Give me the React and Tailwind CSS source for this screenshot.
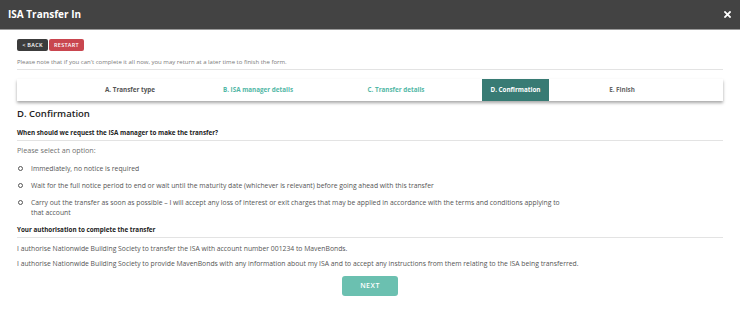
import React from "react";

export default function App() {
  const font = { fontFamily: '"Open Sans", "Liberation Sans", sans-serif' };
  return (
    <div className="w-[740px] h-[313px] bg-white overflow-hidden" style={font}>
      <div className="h-[30px] bg-[#434343] border-b border-[#9a9a9a] flex items-center justify-between pl-[8px] pr-[9px]">
        <span className="text-white font-bold text-[10px]">ISA Transfer In</span>
        <svg width="7" height="7" viewBox="0 0 10 10">
          <path d="M1.5 1.5 L8.5 8.5 M8.5 1.5 L1.5 8.5" stroke="white" strokeWidth="2.6" strokeLinecap="square" />
        </svg>
      </div>
      <div className="px-[17px]">
        <div className="flex gap-[1px] mt-[9px]">
          <div className="h-[12px] w-[31px] bg-[#3c3c3c] rounded-[2px] flex items-center justify-center text-white text-[5.5px] font-semibold tracking-[0.3px]">&lt; BACK</div>
          <div className="h-[12px] w-[35px] bg-[#c9464f] rounded-[2px] flex items-center justify-center text-white text-[5.5px] font-semibold tracking-[0.3px]">RESTART</div>
        </div>
        <div className="mt-[7px] pb-[2px] text-[6px] leading-[9px] text-[#7a7a7a] border-b border-[#e3e3e3]">
          Please note that if you can't complete it all now, you may return at a later time to finish the form.
        </div>
        <div className="mt-[9px] h-[22px] bg-white shadow-[0_2px_3px_rgba(0,0,0,0.35)] flex items-stretch text-[6.3px] font-bold">
          <div className="w-[43px]" />
          <div className="w-[140px] flex items-center justify-center text-[#555] whitespace-nowrap">A. Transfer type</div>
          <div className="w-[116px] flex items-center justify-center text-[#52b7a6] whitespace-nowrap">B. ISA manager details</div>
          <div className="w-[160px] flex items-center justify-center text-[#52b7a6] whitespace-nowrap">C. Transfer details</div>
          <div className="w-[6px]" />
          <div className="w-[67px] flex items-center justify-center bg-[#387b74] text-white whitespace-nowrap">D. Confirmation</div>
          <div className="w-[146px] flex items-center justify-center text-[#666] whitespace-nowrap">E. Finish</div>
        </div>
        <div className="mt-[6px] text-[9.5px] leading-[14px] font-semibold text-[#222]">D. Confirmation</div>
        <div className="mt-[7px] pb-[3px] text-[6.3px] leading-[9px] font-bold text-[#222] border-b border-[#e3e3e3]">
          When should we request the ISA manager to make the transfer?
        </div>
        <div className="mt-[4px] text-[7.2px] leading-[10px] text-[#707070]">Please select an option:</div>
        <div className="mt-[9px] flex flex-col gap-[7px] text-[6.8px] leading-[10px] text-[#555]">
          {[
            "Immediately, no notice is required",
            "Wait for the full notice period to end or wait until the maturity date (whichever is relevant) before going ahead with this transfer",
            "Carry out the transfer as soon as possible – I will accept any loss of interest or exit charges that may be applied in accordance with the terms and conditions applying to that account",
          ].map((t, i) => (
            <div key={i} className="flex items-start">
              <div className="w-[14px] pt-[2px] pl-[1px]">
                <div className="w-[5px] h-[5px] rounded-full border border-[#555]" />
              </div>
              <div className="max-w-[530px]">{t}</div>
            </div>
          ))}
        </div>
        <div className="mt-[7px] pb-[3px] text-[6.3px] leading-[9px] font-bold text-[#222] border-b border-[#e3e3e3]">
          Your authorisation to complete the transfer
        </div>
        <div className="mt-[6px] text-[6.8px] leading-[10px] text-[#555]">
          I authorise Nationwide Building Society to transfer the ISA with account number 001234 to MavenBonds.
        </div>
        <div className="mt-[5px] text-[6.8px] leading-[10px] text-[#555]">
          I authorise Nationwide Building Society to provide MavenBonds with any information about my ISA and to accept any instructions from them relating to the ISA being transferred.
        </div>
        <div className="flex justify-center mt-[7px]">
          <div className="w-[56px] h-[20px] rounded-[3px] bg-[#6bc0b0] flex items-center justify-center text-white text-[7px] font-semibold tracking-[0.5px]">NEXT</div>
        </div>
      </div>
    </div>
  );
}
